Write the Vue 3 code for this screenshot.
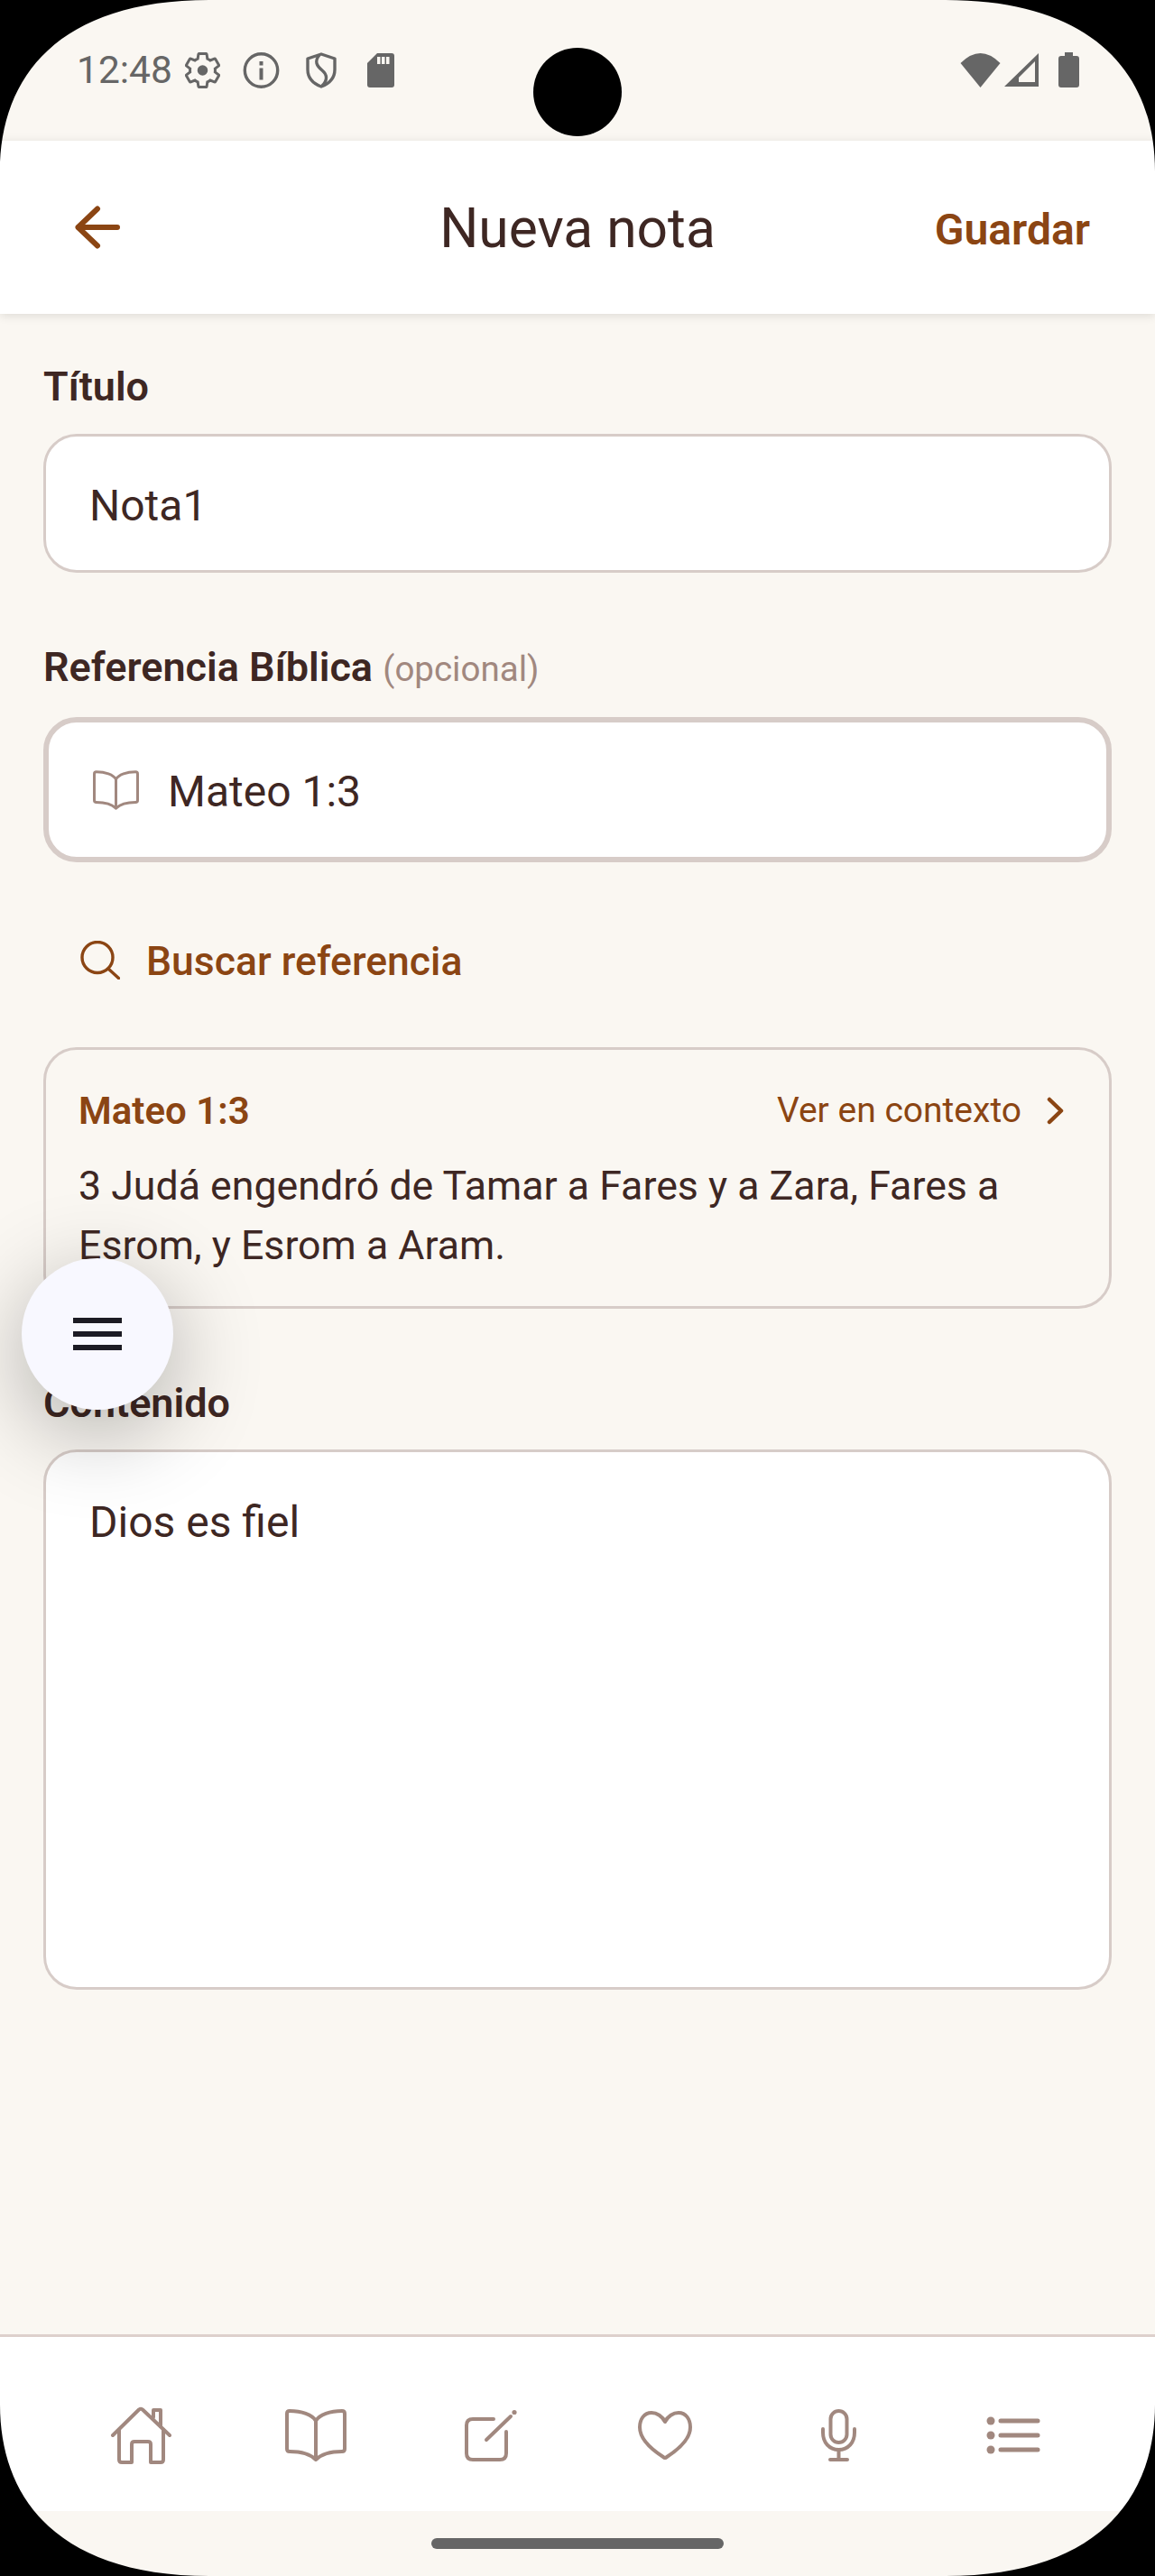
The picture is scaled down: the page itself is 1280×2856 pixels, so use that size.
<script setup>
const referencia = 'Mateo 1:3'
const versiculo = '3 Judá engendró de Tamar a Fares y a Zara, Fares a Esrom, y Esrom a Aram.'
</script>

<template>
  <div class="screen">
    <div class="statusbar">
      <div class="status-left">
        <span class="clock">12:48</span>
        <svg class="ic-gear" viewBox="1.5 1.5 21 21" width="39" height="40">
          <path fill="none" stroke="#666" stroke-width="1.6" d="M19.43 12.98c.04-.32.07-.64.07-.98 0-.34-.03-.66-.07-.98l2.11-1.65c.19-.15.24-.42.12-.64l-2-3.46c-.09-.16-.26-.25-.44-.25-.06 0-.12.01-.17.03l-2.49 1c-.52-.4-1.08-.73-1.69-.98l-.38-2.65C14.46 2.18 14.25 2 14 2h-4c-.25 0-.46.18-.49.42l-.38 2.65c-.61.25-1.17.59-1.69.98l-2.49-1c-.06-.02-.12-.03-.18-.03-.17 0-.34.09-.43.25l-2 3.46c-.13.22-.07.49.12.64l2.11 1.65c-.04.32-.07.65-.07.98 0 .33.03.66.07.98l-2.11 1.65c-.19.15-.24.42-.12.64l2 3.46c.09.16.26.25.44.25.06 0 .12-.01.17-.03l2.49-1c.52.4 1.08.73 1.69.98l.38 2.65c.03.24.24.42.49.42h4c.25 0 .46-.18.49-.42l.38-2.65c.61-.25 1.17-.59 1.69-.98l2.49 1c.06.02.12.03.18.03.17 0 .34-.09.43-.25l2-3.46c.12-.22.07-.49-.12-.64l-2.11-1.65z" />
          <circle cx="12" cy="12" r="3.1" fill="#666" />
        </svg>
        <svg class="ic-info" viewBox="0 0 41 40" width="41" height="40">
          <circle cx="20.5" cy="20" r="18.2" fill="none" stroke="#666" stroke-width="3.4" />
          <rect x="18.5" y="10" width="4" height="4.5" fill="#666" />
          <rect x="18.5" y="17.5" width="4" height="13" fill="#666" />
        </svg>
        <svg class="ic-shield" viewBox="0 0 34 40" width="34" height="40">
          <path fill="none" stroke="#666" stroke-width="3.4" stroke-linejoin="round" d="M17 2 32 7V19C32 29 25 35 17 38 9 35 2 29 2 19V7Z" />
          <path fill="none" stroke="#666" stroke-width="3.4" d="M15 3C9 10 12 15 18 20 24 25 24 31 18 37" />
        </svg>
        <svg class="ic-sd" viewBox="0 0 30 38" width="30" height="38">
          <path fill="#666" d="M11 0H27Q30 0 30 3V35Q30 38 27 38H3Q0 38 0 35V11Z" />
          <path fill="#faf7f2" d="M11 4h3.500v8H11zM16 4h3.500v8H16zM21 4h3.500v8H21z" />
        </svg>
      </div>
      <div class="status-right">
        <svg viewBox="0 0 45 38" width="45" height="38">
          <path fill="#666" d="M.5 11Q22.5-11 44.5 11L22.5 38Z" />
        </svg>
        <svg viewBox="0 0 38 37" width="38" height="37">
          <path fill="#666" fill-rule="evenodd" d="M38 0V37H0ZM16 32H34V9L16 27Z" />
        </svg>
        <svg class="ic-batt" viewBox="0 0 23 39" width="23" height="39">
          <path fill="#666" d="M7 0H16V4H20Q23 4 23 7V36Q23 39 20 39H3Q0 39 0 36V7Q0 4 3 4H7Z" />
        </svg>
      </div>
    </div>

    <header class="topbar">
      <svg class="back" viewBox="0 0 50 48" width="50" height="48">
        <path fill="none" stroke="#8b4513" stroke-width="6" stroke-linecap="round" stroke-linejoin="round" d="M25 3.500 3.500 24 25 44.500M3.500 24H47" />
      </svg>
      <h1>Nueva nota</h1>
      <span class="save">Guardar</span>
    </header>

    <main class="content">
      <label class="label first">Título</label>
      <div class="input">Nota1</div>

      <label class="label second">Referencia Bíblica <span class="optional">(opcional)</span></label>
      <div class="ref-box">
        <svg viewBox="0 0 68 58" width="51" height="44">
          <path fill="none" stroke="#a1887f" stroke-width="4" stroke-linejoin="round" d="M34 13C30 6 18 2 5 2Q2 2 2 5V44Q2 47 5 47C18 47 28 50 34 56 40 50 50 47 63 47Q66 47 66 44V5Q66 2 63 2C50 2 38 6 34 13V56" />
        </svg>
        <span>{{ referencia }}</span>
      </div>

      <div class="search">
        <svg viewBox="0 0 44 43" width="44" height="43">
          <circle cx="19" cy="18.500" r="17" fill="none" stroke="#8b4513" stroke-width="3.400" />
          <path stroke="#8b4513" stroke-width="3.400" stroke-linecap="round" d="M31 31 42.500 41.500" />
        </svg>
        <span>Buscar referencia</span>
      </div>

      <section class="verse">
        <div class="verse-head">
          <strong>{{ referencia }}</strong>
          <span class="context">Ver en contexto
            <svg viewBox="0 0 19 31" width="19" height="31">
              <path fill="none" stroke="#8b4513" stroke-width="4.500" stroke-linecap="round" stroke-linejoin="round" d="M3 3 16 15.500 3 28" />
            </svg>
          </span>
        </div>
        <p>{{ versiculo }}</p>
      </section>

      <label class="label last">Contenido</label>
      <div class="input textarea">Dios es fiel</div>
    </main>

    <nav class="tabs">
      <svg viewBox="0 0 69 64" width="69" height="64">
        <g fill="none" stroke="#a1887f" stroke-width="4" stroke-linecap="round" stroke-linejoin="round">
          <path d="M3 32 32 3.500Q34 2 36 3.500L66 32" />
          <path d="M10 26V59Q10 62 13 62H24V42Q24 39 27 39H42Q45 39 45 42V62H56Q59 62 59 59V26" />
          <path d="M48 12V4H56V22" />
        </g>
      </svg>
      <svg viewBox="0 0 68 58" width="68" height="58">
        <path fill="none" stroke="#a1887f" stroke-width="4" stroke-linejoin="round" d="M34 13C30 6 18 2 5 2Q2 2 2 5V44Q2 47 5 47C18 47 28 50 34 56 40 50 50 47 63 47Q66 47 66 44V5Q66 2 63 2C50 2 38 6 34 13V56" />
      </svg>
      <svg viewBox="0 0 59 58" width="59" height="58">
        <g fill="none" stroke="#a1887f" stroke-width="4" stroke-linecap="round" stroke-linejoin="round">
          <path d="M33 11H10Q3 11 3 18V49Q3 56 10 56H40Q47 56 47 49V25" />
          <path d="M25 34 52 8" />
        </g>
        <circle cx="56" cy="3.500" r="2.600" fill="#a1887f" />
      </svg>
      <svg viewBox="0 0 60 54" width="60" height="54">
        <path fill="none" stroke="#a1887f" stroke-width="4" stroke-linejoin="round" d="M30 12C27 6 21 2 15 2 7 2 2 9 2 18 2 31 14 42 28 51Q30 53 32 51C46 42 58 31 58 18 58 9 53 2 45 2 39 2 33 6 30 12Z" />
      </svg>
      <svg viewBox="0 0 41 58" width="41" height="58">
        <g fill="none" stroke="#a1887f" stroke-width="4" stroke-linecap="round">
          <rect x="11.500" y="2" width="18" height="35" rx="9" />
          <path d="M3 22V26C3 37 10 45 20.500 45 31 45 38 37 38 26V22" />
          <path d="M20.500 45V56M11 56H30" />
        </g>
      </svg>
      <svg viewBox="0 0 60 42" width="60" height="42">
        <g fill="#a1887f">
          <circle cx="5" cy="5" r="4.500" />
          <circle cx="5" cy="21" r="4.500" />
          <circle cx="5" cy="37" r="4.500" />
        </g>
        <path stroke="#a1887f" stroke-width="5" stroke-linecap="round" d="M16 5H57M16 21H57M16 37H57" />
      </svg>
    </nav>
    <div class="navbar"><div class="handle"></div></div>

    <button class="fab">
      <span></span><span></span><span></span>
    </button>

    <div class="camera"></div>
    <svg class="corner tl" viewBox="0 0 232 190" width="232" height="190"><path d="M0 0H232C65 0 0 85 0 190Z" /></svg>
    <svg class="corner tr" viewBox="0 0 232 190" width="232" height="190"><path d="M0 0H232C65 0 0 85 0 190Z" /></svg>
    <svg class="corner bl" viewBox="0 0 232 190" width="232" height="190"><path d="M0 0H232C65 0 0 85 0 190Z" /></svg>
    <svg class="corner br" viewBox="0 0 232 190" width="232" height="190"><path d="M0 0H232C65 0 0 85 0 190Z" /></svg>
  </div>
</template>

<style>
html, body { margin: 0; padding: 0; background: #000; }
</style>

<style scoped>
* { box-sizing: border-box; }
.screen {
  position: relative;
  width: 1280px;
  height: 2856px;
  overflow: hidden;
  display: flex;
  flex-direction: column;
  background: #faf7f2;
  color: #3e2723;
  font-family: Roboto, "Liberation Sans", sans-serif;
}
svg { display: block; flex: none; }

.statusbar {
  height: 156px;
  flex: none;
  display: flex;
  justify-content: space-between;
  align-items: flex-start;
  padding: 58px 84px 0 85px;
}
.status-left, .status-right { display: flex; align-items: center; }
.clock { font-size: 42.5px; line-height: 40px; color: #666; margin-right: 14px; }
.ic-info { margin-left: 25px; }
.ic-shield { margin-left: 29px; }
.ic-sd { margin-left: 34px; }
.status-right { gap: 4px; }
.ic-batt { margin-left: 18px; }

.topbar {
  position: relative;
  z-index: 1;
  height: 192px;
  flex: none;
  display: flex;
  align-items: center;
  justify-content: space-between;
  padding: 0 72px 0 83px;
  background: #fff;
  box-shadow: 0 2px 10px rgba(0, 0, 0, 0.12);
}
.topbar h1 {
  position: absolute;
  left: 0;
  right: 0;
  margin: 4px 0 0;
  text-align: center;
  font-size: 60.5px;
  font-weight: 400;
  line-height: 72px;
}
.save { margin-top: 5px; font-size: 48px; font-weight: 600; color: #8b4513; }

.content {
  flex: 1;
  padding: 0 48px;
  display: flex;
  flex-direction: column;
}
.label {
  display: block;
  font-size: 45px;
  line-height: 54px;
  font-weight: 600;
}
.label.first { margin: 54px 0 25px; }
.label.second { margin: 78px 0 26px; }
.label.last { margin: 78px 0 24px; }
.optional { font-size: 38.5px; font-weight: 400; color: #a1887f; }

.input {
  height: 154px;
  padding: 4px 48px 0;
  display: flex;
  align-items: center;
  background: #fff;
  border: 3px solid #d7ccc8;
  border-radius: 37px;
  font-size: 48px;
}
.textarea {
  height: 599px;
  align-items: flex-start;
  padding-top: 50px;
  line-height: 56px;
}
.ref-box {
  height: 161px;
  padding: 0 0 0 49px;
  display: flex;
  align-items: center;
  gap: 32px;
  background: #fff;
  border: 6px solid #d7ccc8;
  border-radius: 37px;
  font-size: 48px;
}
.ref-box span { margin-top: 3px; }

.search {
  margin: 76px 0 0 41px;
  height: 64px;
  display: flex;
  align-items: center;
  gap: 29px;
  font-size: 44.5px;
  font-weight: 500;
  color: #8b4513;
}
.search span { margin-top: 3px; }
.verse {
  margin-top: 65px;
  height: 290px;
  padding: 41px 50px 0 36px;
  border: 3px solid #d7ccc8;
  border-radius: 37px;
}
.verse-head {
  display: flex;
  justify-content: space-between;
  align-items: center;
  height: 52px;
  color: #8b4513;
}
.verse-head strong { font-size: 42px; font-weight: 600; }
.context { display: flex; align-items: center; gap: 28px; font-size: 39px; }
.verse p {
  margin: 25px 0 0;
  font-size: 44.7px;
  line-height: 66px;
}

.tabs {
  height: 196px;
  flex: none;
  padding: 25px 60px 0;
  display: grid;
  grid-template-columns: repeat(6, 1fr);
  align-items: center;
  justify-items: center;
  background: #fff;
  border-top: 3px solid #ddd0cc;
}
.navbar {
  height: 72px;
  flex: none;
  padding-top: 30px;
  display: flex;
  justify-content: center;
}
.handle { width: 324px; height: 12px; border-radius: 6px; background: #666; }

.fab {
  position: absolute;
  left: 24px;
  top: 1395px;
  z-index: 2;
  width: 168px;
  height: 168px;
  padding: 0;
  border: 0;
  border-radius: 50%;
  background: #f8f8ff;
  box-shadow: 0 24px 100px rgba(0, 0, 0, 0.3);
  display: flex;
  flex-direction: column;
  align-items: center;
  justify-content: center;
  gap: 9px;
}
.fab span { display: block; width: 54px; height: 6px; background: #1c1b24; }

.camera {
  position: absolute;
  left: 591px;
  top: 53px;
  z-index: 3;
  width: 98px;
  height: 98px;
  border-radius: 50%;
  background: #000;
}
.corner { position: absolute; z-index: 3; fill: #000; }
.tl { left: 0; top: 0; }
.tr { right: 0; top: 0; transform: scaleX(-1); }
.bl { left: 0; bottom: 0; transform: scaleY(-1); }
.br { right: 0; bottom: 0; transform: scale(-1, -1); }
</style>
